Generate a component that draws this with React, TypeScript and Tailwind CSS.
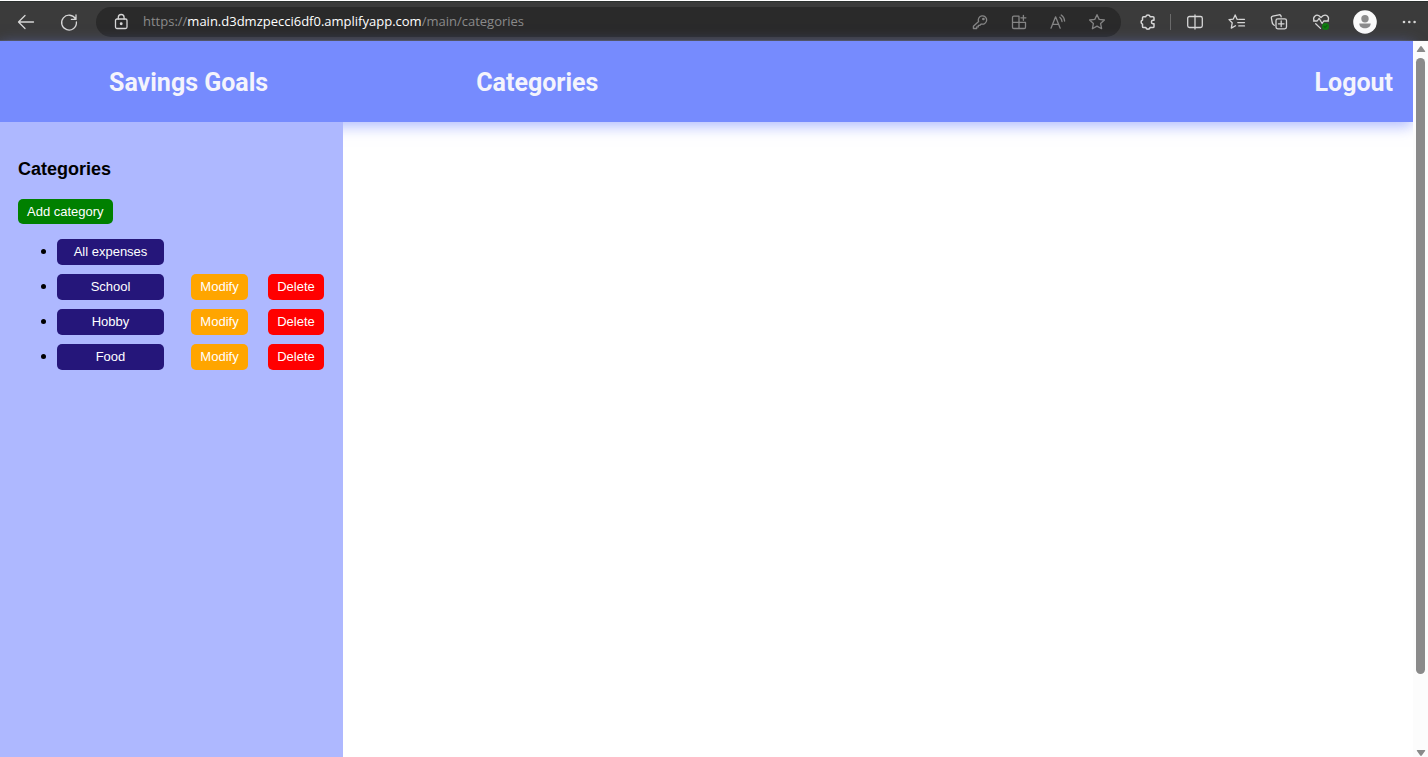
import type { ReactNode } from "react";

const categories = [
  { name: "All expenses", editable: false },
  { name: "School", editable: true },
  { name: "Hobby", editable: true },
  { name: "Food", editable: true },
];

function IconButton({ label, children }: { label: string; children: ReactNode }) {
  return (
    <button type="button" aria-label={label} className="flex size-5 shrink-0 items-center justify-center">
      <svg
        aria-hidden="true"
        viewBox="0 0 20 20"
        className="size-5"
        fill="none"
        stroke="currentColor"
        strokeWidth="1.3"
        strokeLinecap="round"
        strokeLinejoin="round"
      >
        {children}
      </svg>
    </button>
  );
}

function BrowserBar() {
  return (
    <div className="flex h-[41px] shrink-0 items-center border-t border-t-white bg-[#3b3b3b] pt-[2px] pr-[9px] pl-4 text-[#d6d6d6] shadow-[inset_0_1px_0_#2b302e,inset_0_-1px_0_#4c4c4c]">
      <div className="flex gap-[23px]">
        <IconButton label="Back">
          <path d="M17.5 10H3M9 3.5 2.5 10 9 16.5" />
        </IconButton>
        <IconButton label="Refresh">
          <path d="M16.6 7.2A7.4 7.4 0 1 0 17.4 10M17 3v4.4h-4.6" />
        </IconButton>
      </div>

      <div className="ml-[17px] flex h-[30px] min-w-0 flex-1 items-center rounded-full bg-[#2a2a2a] pr-[14px] pl-[15px]">
        <IconButton label="Site information">
          <rect x="4.5" y="7" width="11.5" height="9.5" rx="1.5" />
          <path d="M7.3 7V5.4a2.9 2.9 0 0 1 5.8 0V7" />
          <circle cx="10.2" cy="11.7" r="0.8" fill="currentColor" />
        </IconButton>
        <div className="ml-3 min-w-0 flex-1 truncate font-['Open_Sans',sans-serif] text-[13px] text-[#8a8a8a]">
          https://<span className="text-white">main.d3dmzpecci6df0.amplifyapp.com</span>/main/categories
        </div>
        <div className="flex gap-[19px] text-[#858585]">
          <IconButton label="Passwords">
            <path d="M8.6 9.6A4.2 4.2 0 1 1 11.2 12L9.9 13.3H8.3v1.6H6.7v1.6H3.4v-2.3l5.2-4.6Z" />
            <circle cx="13.4" cy="7" r="0.7" fill="currentColor" />
          </IconButton>
          <IconButton label="Install app">
            <path d="M10 4.2H4.8a1.3 1.3 0 0 0-1.3 1.3v9.7a1.3 1.3 0 0 0 1.3 1.3h10.4a1.3 1.3 0 0 0 1.3-1.3v-4.8h-13M10 4.2v12.3M14.4 3.3v5M11.9 5.8h5" />
          </IconButton>
          <IconButton label="Read aloud">
            <path d="m3 16.2 4.6-11.4 4.6 11.4M4.7 12.4h5.8M11.8 5.3a6 6 0 0 1 2.2 4.2M13.2 3a8 8 0 0 1 3.4 6" />
          </IconButton>
          <IconButton label="Add to favorites">
            <path d="m10 2.7 2.2 4.7 5.2.6-3.8 3.5 1 5.2-4.6-2.6-4.6 2.6 1-5.2L2.6 8l5.2-.6Z" />
          </IconButton>
        </div>
      </div>

      <div className="ml-[17px] flex items-center gap-3">
        <IconButton label="Extensions">
          <path
            strokeWidth="1.5"
            d="M5.6 4.7h2.2a2.2 2.2 0 0 1 4.3 0h2.8a1.1 1.1 0 0 1 1.1 1.1v2.5h-1.2a1.8 1.8 0 0 0 0 3.5H16v2.6a1.1 1.1 0 0 1-1.1 1.1h-2.8a2.2 2.2 0 0 1-4.3 0H5.6a1.1 1.1 0 0 1-1.1-1.1v-2.3a2.2 2.2 0 0 1 0-4.1V5.8a1.1 1.1 0 0 1 1.1-1.1Z"
          />
        </IconButton>
        <span className="h-4 w-px bg-[#6b6b6b]" />
      </div>
      <div className="ml-[14px] flex items-center gap-[22px]">
        <IconButton label="Split screen">
          <path d="M7.5 4.5h-3A1.8 1.8 0 0 0 2.7 6.3v7.4a1.8 1.8 0 0 0 1.8 1.8h3M12.5 4.5h3a1.8 1.8 0 0 1 1.8 1.8v7.4a1.8 1.8 0 0 1-1.8 1.8h-3M7.5 4.5H10M12.5 4.5H10M7.5 15.5h5M10 3v14" />
        </IconButton>
        <IconButton label="Favorites">
          <path d="M11 7.3 10 7.2 8.2 2.9 6.3 7.1 2 7.6l3.2 3.2-.9 5.3 4.2-2.4M12 7.3h5.5M10.8 10.6h6.7M11.8 13.9h5.7" />
        </IconButton>
        <IconButton label="Collections">
          <path d="M5.3 13.4 3.9 12a2 2 0 0 1-.6-1L2.4 6.1a1.7 1.7 0 0 1 1.3-2l6.3-1.3a1.7 1.7 0 0 1 2 1.2l.2.8" />
          <rect x="7" y="6.8" width="10.5" height="10" rx="1.8" />
          <path d="M12.2 9v5.6M9.4 11.8H15" />
        </IconButton>
        <IconButton label="Browser essentials">
          <path d="M3 8.5C1.5 5 5 2 8 3.8l2 1.8 2-1.8c3.2-2 6.8 1.2 5 4.7M2.5 9h3.7l1.9-2.7 3 5.2L12.8 9h4.7M4.7 11.7l4.8 4.7" />
          <circle cx="14.5" cy="14.5" r="3.5" fill="#107c10" stroke="none" />
          <path d="m13 14.5 1 1 2-2" stroke="#0c640c" />
        </IconButton>
        <button type="button" aria-label="Profile" className="size-6 shrink-0">
          <svg aria-hidden="true" viewBox="0 0 24 24" className="size-6">
            <circle cx="12" cy="12" r="11.8" fill="#fafafa" />
            <circle cx="12" cy="8.7" r="3.7" fill="#8c8c8c" />
            <path d="M6.3 13.5h11.4c0 3.2-2.5 4.8-5.7 4.8s-5.7-1.6-5.7-4.8Z" fill="#8c8c8c" />
          </svg>
        </button>
        <IconButton label="Settings and more">
          <g fill="currentColor" stroke="none">
            <circle cx="5" cy="10" r="1.3" />
            <circle cx="10.3" cy="10" r="1.3" />
            <circle cx="15.6" cy="10" r="1.3" />
          </g>
        </IconButton>
      </div>
    </div>
  );
}

function Scrollbar() {
  return (
    <div aria-hidden="true" className="flex w-[15px] shrink-0 flex-col items-center bg-[#fcfcfc] pt-[5px]">
      <svg viewBox="0 0 10 6" className="h-[6px] w-[10px]">
        <path d="M4.2.5.8 5.2q-.3.8.6.8h7.2q.9 0 .6-.8L5.8.5q-.8-.8-1.6 0Z" fill="#8a8a8a" />
      </svg>
      <div className="mt-[6px] flex w-full flex-1 flex-col items-center">
        <div className="w-[9px] flex-[616] rounded-full bg-[#8a8a8a]" />
        <div className="flex-[76]" />
      </div>
      <svg viewBox="0 0 10 7" className="h-[7px] w-[10px]">
        <path d="M4.2 5.5.8.8Q.5 0 1.4 0h7.2q.9 0 .6.8L5.8 5.5q-.8.8-1.6 0Z" fill="#8a8a8a" />
      </svg>
    </div>
  );
}

export default function App() {
  return (
    <div className="flex min-h-screen flex-col bg-white font-['Liberation_Sans',Arial,sans-serif]">
      <BrowserBar />
      <div className="flex flex-1">
        <div className="flex min-w-0 flex-1 flex-col">
          <nav className="flex h-[81px] shrink-0 items-center bg-[#768bfe] pt-[2px] pr-5 pl-[109px] font-[Roboto,sans-serif] text-[25px] font-bold text-[#f4f4fc] shadow-[0_4px_14px_#768bfe99]">
            <a href="#savings">Savings Goals</a>
            <a href="#categories" className="ml-52">Categories</a>
            <a href="#logout" className="ml-auto">Logout</a>
          </nav>
          <div className="flex flex-1">
            <aside className="relative w-[343px] shrink-0 bg-[#aeb8ff] px-[18px] pt-[35px]">
              <h2 className="text-[18px] leading-6 font-bold text-black">Categories</h2>
              <button type="button" className="mt-[18px] block h-[25px] rounded-[5px] bg-[#008000] px-[9px] text-[13px] text-white">
                Add category
              </button>
              <ul className="mt-[15px] flex list-disc flex-col gap-[9px] pl-[39px] text-base text-black">
                {categories.map(({ name, editable }) => (
                  <li key={name}>
                    <div className="flex h-[26px] text-[13px] text-white">
                      <button type="button" className="w-[107px] rounded-[5px] bg-[#25167a]">{name}</button>
                      {editable && (
                        <>
                          <button type="button" className="ml-[27px] w-[57px] rounded-[5px] bg-[#ffa500]">Modify</button>
                          <button type="button" className="ml-5 w-14 rounded-[5px] bg-[#ff0000]">Delete</button>
                        </>
                      )}
                    </div>
                  </li>
                ))}
              </ul>
            </aside>
            <main className="flex-1" />
          </div>
        </div>
        <Scrollbar />
      </div>
    </div>
  );
}
